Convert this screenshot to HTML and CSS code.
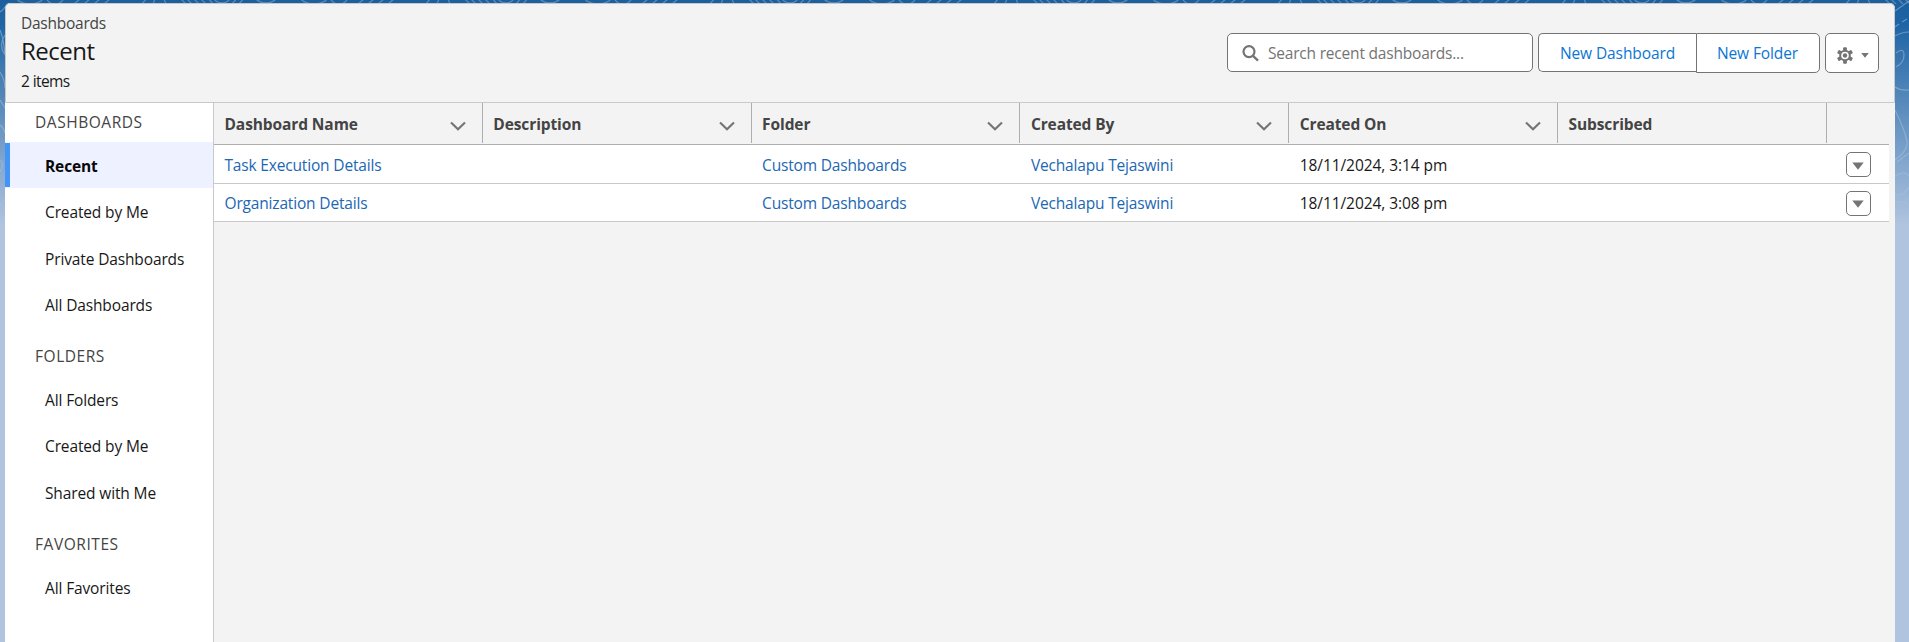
FILE: index.html
```
<!DOCTYPE html>
<html lang="en">
<head>
<meta charset="utf-8">
<title>Recent | Dashboards</title>
<link rel="stylesheet" href="styles.css">
</head>
<body>
<svg class="contours" width="1909" height="250" aria-hidden="true">
  <defs>
    <pattern id="rings" width="284" height="240" patternUnits="userSpaceOnUse">
      <g fill="none" stroke="#8fb3d6" stroke-opacity=".5" stroke-width="1.3">
        <ellipse cx="30" cy="-4" rx="14" ry="8"/><ellipse cx="55" cy="-4" rx="9" ry="8"/>
        <path d="M74 4l6-5M84 4l6-5M94 4l6-5M104 4l6-5M142 4l4-5M153 4l2-5M166 4l-2-5"/>
        <path d="M180 -2l6 6M186 -2l6 6M193 -2l6 6M200 -2l6 6M208 -2l5 6M232 4l5-6M239 4l5-6"/>
        <ellipse cx="222" cy="-3" rx="8" ry="6"/><ellipse cx="266" cy="-6" rx="12" ry="9"/>
      </g>
    </pattern>
  </defs>
  <rect width="1909" height="4" fill="url(#rings)"/>
  <g fill="none" stroke="#a9c4e0" stroke-opacity=".5" stroke-width="1.2">
    <path d="M1895 11l14-10M1895 27l4-3M1902 22l5-3M1895 36q7-4 14-4M1896 53q8-6 8 2t-8 12M1895 87q6 4 14 3M1895 110q9 18 12 31 1 7-6 14l-6 5M1897 162l12-9M1895 176q10-6 14 0M1895 195q9 1 14-8M1895 203q7-4 14 2M1895 211h5M1903 211l5 1M1895 220q7 2 14 0"/>
    <path d="M0 12q4-3 5-5M0 30q4 10 5 25M5 35q-7 10 0 20M0 72q5 8 5 16M0 100l5 8M0 125q4 3 5 8M0 160q5 4 0 12M0 205l5-6"/>
  </g>
</svg>
<main class="card">
  <header class="page-header">
    <div class="titles">
      <p class="eyebrow">Dashboards</p>
      <h1>Recent</h1>
      <p class="count">2 items</p>
    </div>
    <div class="actions">
      <label class="search">
        <svg width="18" height="18" viewBox="0 0 18 18"><circle cx="7" cy="7.6" r="5.5" fill="none" stroke="#747474" stroke-width="2.2"/><path d="M11 11.8l5 4.8" stroke="#747474" stroke-width="2.3"/></svg>
        <span>Search recent dashboards...</span>
      </label>
      <div class="group">
        <button class="btn first">New Dashboard</button>
        <button class="btn last">New Folder</button>
      </div>
      <button class="btn gear">
        <svg width="16" height="17" viewBox="-8 -8.5 16 17"><g fill="#747474"><rect x="-1.9" y="-8.2" width="3.8" height="16.4" rx="1"/><rect x="-1.9" y="-8.2" width="3.8" height="16.4" rx="1" transform="rotate(60)"/><rect x="-1.9" y="-8.2" width="3.8" height="16.4" rx="1" transform="rotate(120)"/></g><circle r="4.8" fill="#fff" stroke="#747474" stroke-width="2"/><circle r="2.2" fill="#747474"/></svg>
        <svg width="8" height="5" viewBox="0 0 8 5"><path d="M.2 0h7.6L4 4.8z" fill="#747474"/></svg>
      </button>
    </div>
  </header>
  <div class="body">
    <nav class="sidebar">
      <h2>DASHBOARDS</h2>
      <ul>
        <li class="active"><span>Recent</span></li>
        <li>Created by Me</li>
        <li>Private Dashboards</li>
        <li>All Dashboards</li>
      </ul>
      <h2>FOLDERS</h2>
      <ul>
        <li>All Folders</li>
        <li>Created by Me</li>
        <li>Shared with Me</li>
      </ul>
      <h2>FAVORITES</h2>
      <ul>
        <li>All Favorites</li>
      </ul>
    </nav>
    <section class="table">
      <div class="row head">
        <div class="cell"><b>Dashboard Name</b><svg class="chev" viewBox="0 0 16 10"><path d="M1 1.5L8 8.3l7-6.8"/></svg></div>
        <div class="cell"><b>Description</b><svg class="chev" viewBox="0 0 16 10"><path d="M1 1.5L8 8.3l7-6.8"/></svg></div>
        <div class="cell"><b>Folder</b><svg class="chev" viewBox="0 0 16 10"><path d="M1 1.5L8 8.3l7-6.8"/></svg></div>
        <div class="cell"><b>Created By</b><svg class="chev" viewBox="0 0 16 10"><path d="M1 1.5L8 8.3l7-6.8"/></svg></div>
        <div class="cell"><b>Created On</b><svg class="chev" viewBox="0 0 16 10"><path d="M1 1.5L8 8.3l7-6.8"/></svg></div>
        <div class="cell"><b>Subscribed</b></div>
        <div></div>
      </div>
      <div class="row">
        <div class="cell"><a>Task Execution Details</a></div>
        <div class="cell"></div>
        <div class="cell"><a>Custom Dashboards</a></div>
        <div class="cell"><a>Vechalapu Tejaswini</a></div>
        <div class="cell"><span class="date">18/11/2024, 3:14 pm</span></div>
        <div class="cell"></div>
        <div class="menu"><button><svg width="12" height="8" viewBox="0 0 12 8"><path d="M.3 .5h11.4L6 7.7z" fill="#747474"/></svg></button></div>
      </div>
      <div class="row">
        <div class="cell"><a>Organization Details</a></div>
        <div class="cell"></div>
        <div class="cell"><a>Custom Dashboards</a></div>
        <div class="cell"><a>Vechalapu Tejaswini</a></div>
        <div class="cell"><span class="date">18/11/2024, 3:08 pm</span></div>
        <div class="cell"></div>
        <div class="menu"><button><svg width="12" height="8" viewBox="0 0 12 8"><path d="M.3 .5h11.4L6 7.7z" fill="#747474"/></svg></button></div>
      </div>
    </section>
  </div>
</main>
</body>
</html>
```
FILE: styles.css
```
* { box-sizing: border-box; margin: 0; padding: 0; }
html { height: 100%; }
body {
  height: 642px;
  overflow: hidden;
  padding: 3px 14px 0 5px;
  font: 15.5px/20px "Segoe UI", "Open Sans", "Noto Sans", sans-serif;
  letter-spacing: -0.1px;
  color: #181818;
  background: linear-gradient(#1b5f9e 0, #1f65a5 25px, #b0c4df 225px);
}
ul { list-style: none; }
.contours { position: absolute; left: 0; top: 0; }
.card {
  position: relative;
  height: 639px;
  display: flex;
  flex-direction: column;
  background: #f3f3f3;
  border-radius: 5px 5px 0 0;
  overflow: hidden;
}
.page-header {
  height: 100px;
  flex: none;
  display: flex;
  justify-content: space-between;
  padding: 0 15px 0 15px;
  border: 1px solid #c9c9c9;
  border-radius: 5px 5px 0 0;
}
.eyebrow { margin-top: 9px; color: #444; letter-spacing: -0.25px; }
h1 { font-size: 24px; font-weight: 400; line-height: 30px; margin-top: 3px; letter-spacing: -0.5px; }
.count { margin-top: 5px; letter-spacing: -0.6px; }
.actions { display: flex; align-items: flex-start; padding-top: 29px; }
.search {
  width: 306px; height: 39px;
  display: flex; align-items: center; gap: 8px;
  padding: 1px 0 0 14px; margin-right: 5px;
  border: 1px solid #747474; border-radius: 5px;
  background: #fff; color: #747474;
  letter-spacing: -0.2px;
}
.group { display: flex; margin-right: 5px; }
.btn {
  height: 40px; font: inherit; letter-spacing: inherit;
  background: #fff; color: #0b76d3; border: 1px solid #747474;
}
.first { width: 158px; height: 39px; border-radius: 5px 0 0 5px; border-right: 0; padding-top: 1px; }
.last { width: 124px; border-radius: 0 5px 5px 0; padding-right: 1px; }
.gear { width: 54px; border-radius: 5px; display: flex; align-items: center; justify-content: center; gap: 8px; padding: 4px 0 0 1px; }
.body { flex: 1; display: flex; }
.sidebar { width: 209px; background: #fff; border-right: 1px solid #c9c9c9; }
.sidebar h2 { font-size: 15.5px; font-weight: 400; letter-spacing: 0.55px; color: #444; padding-left: 30px; line-height: 39px; height: 39px; }
.sidebar ul { padding-bottom: 10px; }
.sidebar li { height: 46.25px; line-height: 49px; padding-left: 40px; letter-spacing: -0.13px; }
.sidebar .active {
  padding-left: 0;
  background: #eef1ff;
  color: #080808;
  font-weight: 700;
}
.active span { display: block; height: 46px; line-height: 49px; padding-left: 40px; background: linear-gradient(#4294f7, #4294f7) 0 1px / 5px 44px no-repeat; }
.table { flex: 1; }
.row {
  width: 1675px; height: 38.5px;
  display: grid; grid-template-columns: repeat(6, 268.8px) 1fr;
  background: #fff; border-bottom: 1px solid #c9c9c9;
}
.head { height: 42px; background: none; border-color: #aeaeae; color: #444; }
.cell { display: flex; align-items: center; justify-content: space-between; padding: 2px 16px 0 10.5px; }
.head .cell { border-right: 1px solid #aeaeae; margin-bottom: 1px; padding-top: 2px; }
.chev { width: 16px; height: 10px; fill: none; stroke: #747474; stroke-width: 2.1; margin-top: 4px; }
a { color: #1b67b3; letter-spacing: -0.17px; }
.date { letter-spacing: -0.07px; }
.menu { padding: 7px 0 0 19px; }
.menu button {
  width: 25px; height: 25px;
  display: grid; place-items: center;
  padding-top: 2px;
  background: #fff; border: 1px solid #747474; border-radius: 5px;
}
```
